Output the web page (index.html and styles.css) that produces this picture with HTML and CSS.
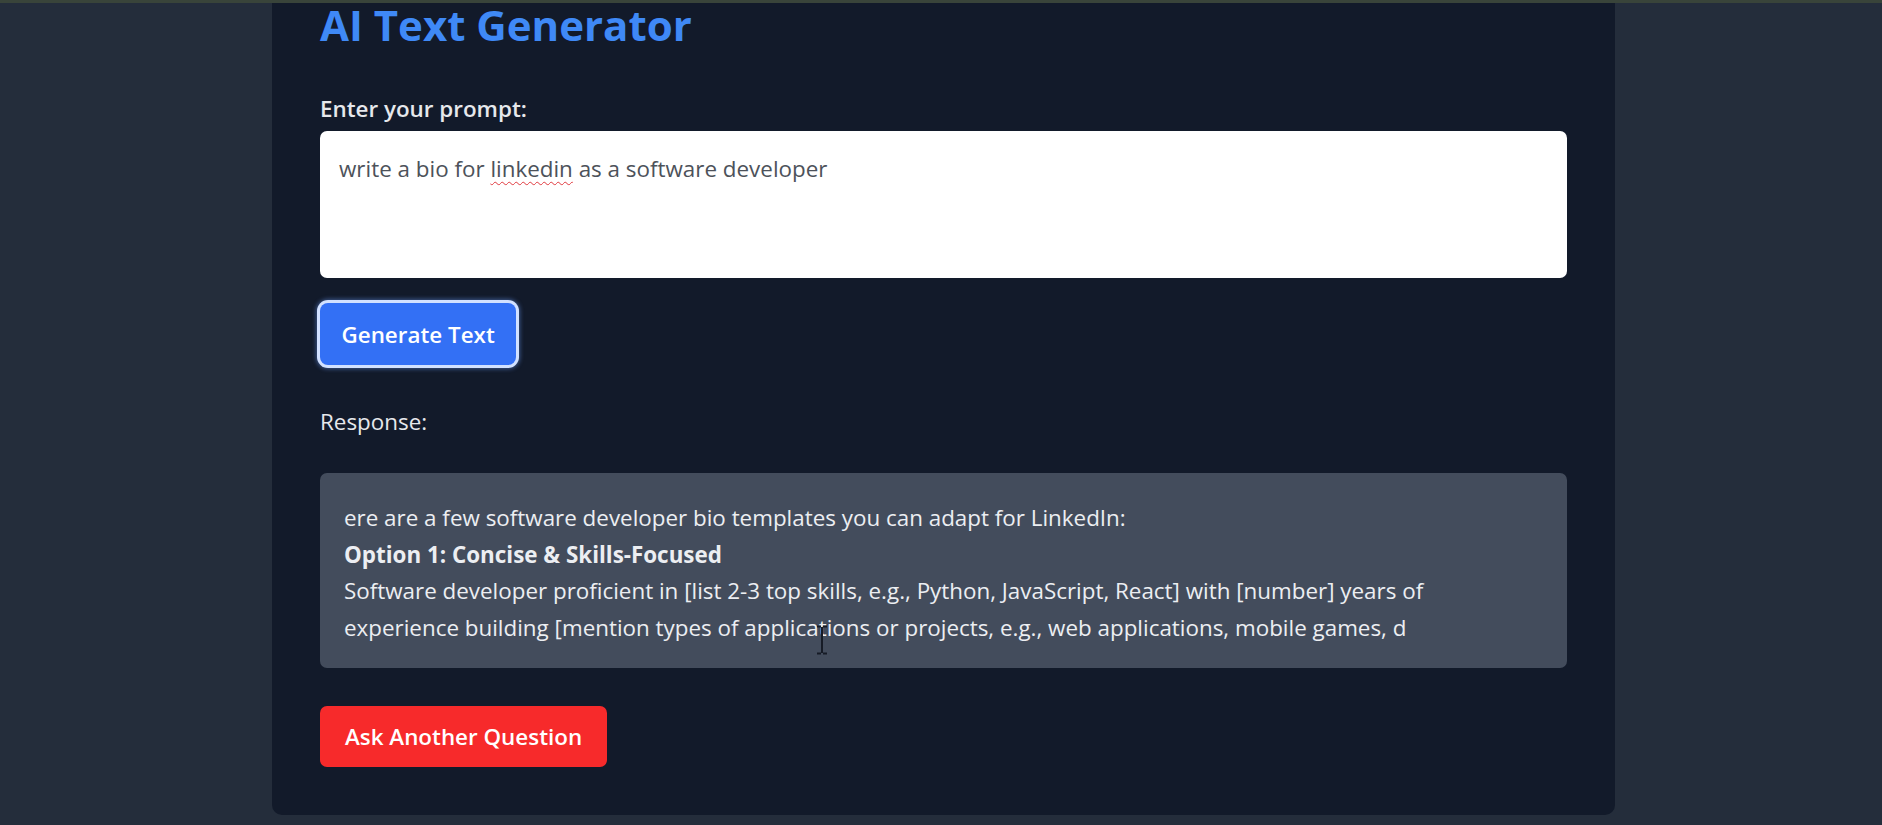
FILE: index.html
```html
<!DOCTYPE html>
<html lang="en">
<head>
<meta charset="utf-8">
<title>AI Text Generator</title>
<link rel="stylesheet" href="styles.css">
</head>
<body>
<main class="card">
  <h1 class="title">AI Text Generator</h1>
  <label class="label" for="prompt">Enter your prompt:</label>
  <div class="prompt" id="prompt">write a bio for <span class="misspelled">linkedin</span> as a software developer</div>
  <button class="btn btn-generate" type="button">Generate Text</button>
  <p class="response-label">Response:</p>
  <div class="response">
    <p class="line">ere are a few software developer bio templates you can adapt for LinkedIn:</p>
    <p class="line strong">Option 1: Concise &amp; Skills-Focused</p>
    <p class="line">Software developer proficient in [list 2-3 top skills, e.g., Python, JavaScript, React] with [number] years of<br>experience building [mention types of applications or projects, e.g., web applications, mobile games, d</p>
    <svg class="ibeam" width="14" height="30" viewBox="0 0 14 30" aria-hidden="true">
      <path d="M2 1.5h4M8 1.5h4M7 2v26M2 28.5h4M8 28.5h4" stroke="#161b26" stroke-width="2" fill="none"/>
    </svg>
  </div>
  <button class="btn btn-reset" type="button">Ask Another Question</button>
</main>
</body>
</html>
```
FILE: styles.css
```css
html, body {
  margin: 0;
  padding: 0;
}
body {
  background: #242d3b;
  border-top: 3px solid #39443a;
  font-family: "Open Sans", "Noto Sans", sans-serif;
  min-height: 822px;
  overflow: hidden;
}
.card {
  width: 1247px;
  margin-left: 272px;
  padding: 0 48px 48px;
  background: #121a2a;
  border-radius: 0 0 10px 10px;
  display: flex;
  flex-direction: column;
  align-items: flex-start;
}
.title {
  margin: 0;
  font-size: 42px;
  line-height: 44px;
  font-weight: 700;
  color: #3f89f6;
}
.label {
  margin-top: 44.5px;
  font-size: 22.4px;
  line-height: 33.6px;
  font-weight: 600;
  color: #e6e8ec;
}
.prompt {
  margin-top: 6px;
  box-sizing: border-box;
  width: 100%;
  height: 147px;
  background: #ffffff;
  border-radius: 7px;
  padding: 20.5px 19px;
  font-size: 22.4px;
  line-height: 33.6px;
  color: #4d525a;
}
.misspelled {
  text-decoration: underline wavy #e0393e;
  text-decoration-thickness: 1px;
  text-underline-offset: 4px;
}
.btn {
  border: 0;
  font-family: inherit;
  color: #ffffff;
  font-weight: 600;
  font-size: 22.4px;
  cursor: pointer;
}
.btn-generate {
  margin-top: 25px;
  height: 62px;
  padding: 0 21.5px;
  background: #3370f5;
  border-radius: 8px;
  box-shadow: 0 0 0 3px #d2e1ff, 0 0 4px 4px rgba(110, 160, 255, 0.45);
}
.response-label {
  margin: 39.5px 0 0;
  font-size: 22.4px;
  line-height: 33.6px;
  font-weight: 500;
  color: #e6e8ec;
}
.response {
  position: relative;
  margin-top: 35px;
  box-sizing: border-box;
  width: 100%;
  background: #434c5c;
  border-radius: 7px;
  padding: 27px 24px 22px;
  color: #eceef2;
  font-size: 22.4px;
  line-height: 36.5px;
}
.line {
  margin: 0;
  white-space: nowrap;
}
.strong {
  font-weight: 700;
}
.ibeam {
  position: absolute;
  left: 495px;
  top: 152px;
}
.btn-reset {
  margin-top: 38px;
  height: 61px;
  padding: 0 25px;
  background: #f72a2b;
  border-radius: 7px;
}
```
